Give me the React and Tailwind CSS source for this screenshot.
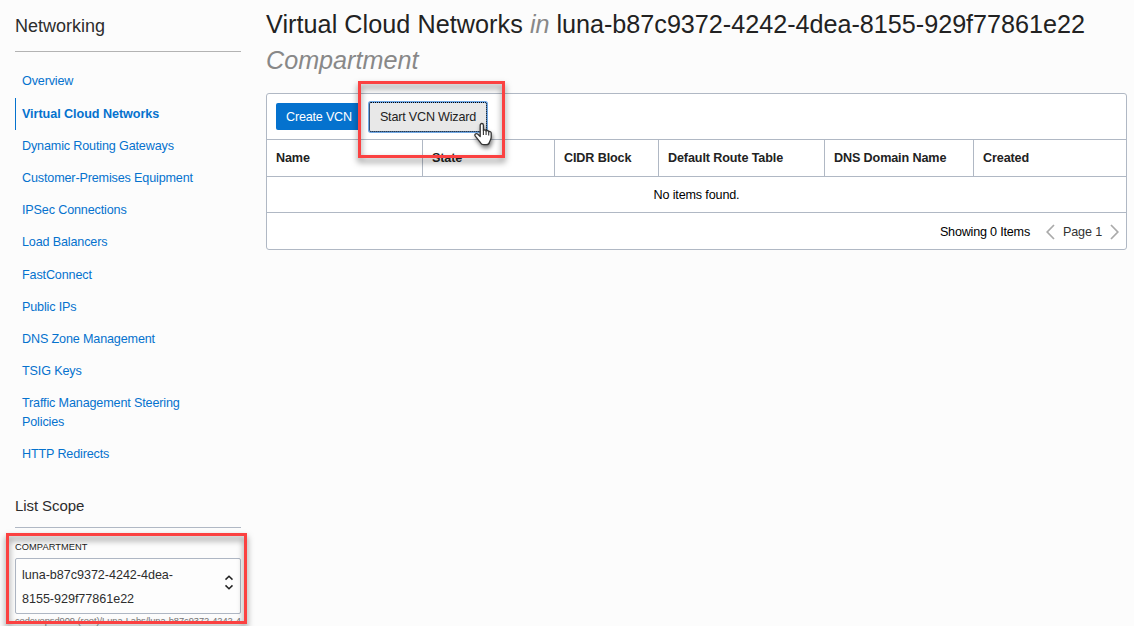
const links = [
  'Overview',
  'Virtual Cloud Networks',
  'Dynamic Routing Gateways',
  'Customer-Premises Equipment',
  'IPSec Connections',
  'Load Balancers',
  'FastConnect',
  'Public IPs',
  'DNS Zone Management',
  'TSIG Keys',
  'Traffic Management Steering Policies',
  'HTTP Redirects',
];

const columns = [
  { name: 'Name', width: 'w-[156px]' },
  { name: 'State', width: 'w-[132px]' },
  { name: 'CIDR Block', width: 'w-[104px]' },
  { name: 'Default Route Table', width: 'w-[166px]' },
  { name: 'DNS Domain Name', width: 'w-[149px]' },
  { name: 'Created', width: 'flex-1' },
];

function Sidebar() {
  return (
    <aside className="ml-[15px] w-[226px] shrink-0">
      <h2 className="flex h-[52px] items-center border-b border-[#b3b3b3] text-[18px] tracking-normal text-[#2d2d2d]">Networking</h2>
      <nav className="h-[432px] pt-[13.35px]">
        {links.map((link) => (
          <a
            key={link}
            className={
              link === 'Virtual Cloud Networks'
                ? 'block border-l border-[#0572ce] py-[7px] pl-[6px] leading-[18.2px] font-bold tracking-[-0.05px] text-[#0572ce]'
                : 'block py-[7px] pr-8 pl-[7px] leading-[18.2px] text-[#0572ce]'
            }
          >
            {link}
          </a>
        ))}
      </nav>
      <h3 className="flex h-[44px] items-center border-b border-[#b0b8c4] text-[15px] tracking-[-0.08px] text-[#2d2d2d]">List Scope</h3>
      <div className="mt-[13px] h-[13px] text-[9.3px] leading-[13px] tracking-[0.05px] text-[#1c1c1c]">COMPARTMENT</div>
      <div className="mt-[4px] flex h-[56px] items-center justify-between rounded-[2px] border border-[#aeb6c3] bg-[#fdfdfd] pr-[6px] pl-[6px] text-[#2d2d2d]">
        <div className="w-[170px] pt-[2px] leading-[24px] tracking-[-0.04px]">luna-b87c9372-4242-4dea-8155-929f77861e22</div>
        <svg className="mt-[-8px] h-[16px] w-[10px]" viewBox="0 0 10 16" fill="none" stroke="#222" strokeWidth="1.5">
          <path d="M1.5 5.6 5 2.3l3.5 3.3M1.5 11.4 5 14.7l3.5-3.3" />
        </svg>
      </div>
      <div className="text-[9.3px] leading-[14px] tracking-[-0.04px] whitespace-nowrap text-[#777]">
        codevopsd909 (root)/Luna-Labs/luna-b87c9372-4242-4
      </div>
    </aside>
  );
}

function NetworksTable() {
  return (
    <section className="mt-[15px] h-[157px] w-[861px] rounded-[3px] border border-[#b0b8c4] bg-white text-[#222]">
      <div className="flex h-[45px] items-center pl-[9px]">
        <button className="h-[27px] w-[84px] rounded-l-[2px] bg-[#0572ce] pl-[10px] text-left tracking-[-0.2px] text-white">Create VCN</button>
        <button className="ml-[10px] h-[28px] w-[116px] rounded-[1px] bg-[#e8e8e8] tracking-[-0.2px] ring-2 ring-[#73a9e5] outline outline-1 outline-dotted outline-black">
          Start VCN Wizard
        </button>
      </div>
      <div className="flex h-[38px] border-y border-[#b0b8c4] font-bold tracking-[-0.12px]">
        {columns.map((c, i) => (
          <div key={c.name} className={`${c.width} flex items-center pl-[9px] ${i < columns.length - 1 ? 'border-r border-[#b0b8c4]' : ''}`}>
            {c.name}
          </div>
        ))}
      </div>
      <div className="flex h-[36px] items-center justify-center border-b border-[#b0b8c4] text-black">No items found.</div>
      <div className="flex h-[38px] items-center justify-end pr-[7px] text-black">
        <span className="tracking-[-0.2px]">Showing 0 Items</span>
        <svg className="mr-[8px] ml-[16px] h-[16px] w-[9px]" viewBox="0 0 9 16" fill="none" stroke="#aaa" strokeWidth="1.7">
          <path d="M8 1 1.2 8 8 15" />
        </svg>
        <span className="text-[#333]">Page 1</span>
        <svg className="ml-[8px] h-[16px] w-[9px]" viewBox="0 0 9 16" fill="none" stroke="#aaa" strokeWidth="1.7">
          <path d="m1 1 6.8 7L1 15" />
        </svg>
      </div>
    </section>
  );
}

const highlight = 'absolute border-[3px] border-[#fb4141] drop-shadow-[0_4px_3px_rgba(0,0,0,0.5)]';

export default function App() {
  return (
    <div className="relative flex h-[626px] w-[1134px] overflow-hidden bg-[#fcfcfc] font-['Liberation_Sans',Arial,sans-serif] text-[12.6px] leading-[18px] tracking-[-0.15px]">
      <Sidebar />
      <main className="ml-[25px] w-[861px] pt-[6px]">
        <h1 className="text-[25.2px] leading-[36px] tracking-[-0.02px] text-[#222]">
          <span className="tracking-[0.05px]">Virtual Cloud Networks </span>
          <i className="text-[#888]">in</i> luna-b87c9372-4242-4dea-8155-929f77861e22 <i className="text-[#888]">Compartment</i>
        </h1>
        <NetworksTable />
      </main>
      <div className={`${highlight} top-[81px] left-[358px] h-[77px] w-[147px]`} />
      <div className={`${highlight} top-[533px] left-[6px] h-[91px] w-[241px]`} />
      <svg className="absolute top-[122px] left-[473px] h-[25px] w-[20px] drop-shadow-[1px_3px_2px_rgba(0,0,0,0.5)]" viewBox="0 0 20 25">
        <path d="M7.2 14.5V3.2c0-2.3 3.2-2.3 3.2 0v5.3c.8-1 2.5-.7 2.7.4.9-.8 2.4-.3 2.6.8 1.1-.5 2.5.2 2.5 1.5v4.1c0 2.3-1.5 3.5-1.8 5.2-.4 1.5-1.4 2.2-3 2.2h-2.8c-1.6 0-2.5-.8-3.1-2l-5.2-6.5c-1.3-1.8.8-3.4 2.3-2.1z" fill="#fff" stroke="#333" strokeWidth="1.3" strokeLinejoin="round" />
        <path d="M10.4 8.5v4.5M13.1 9v4M15.7 10v3.5" fill="none" stroke="#333" strokeWidth="1.1" />
      </svg>
    </div>
  );
}
